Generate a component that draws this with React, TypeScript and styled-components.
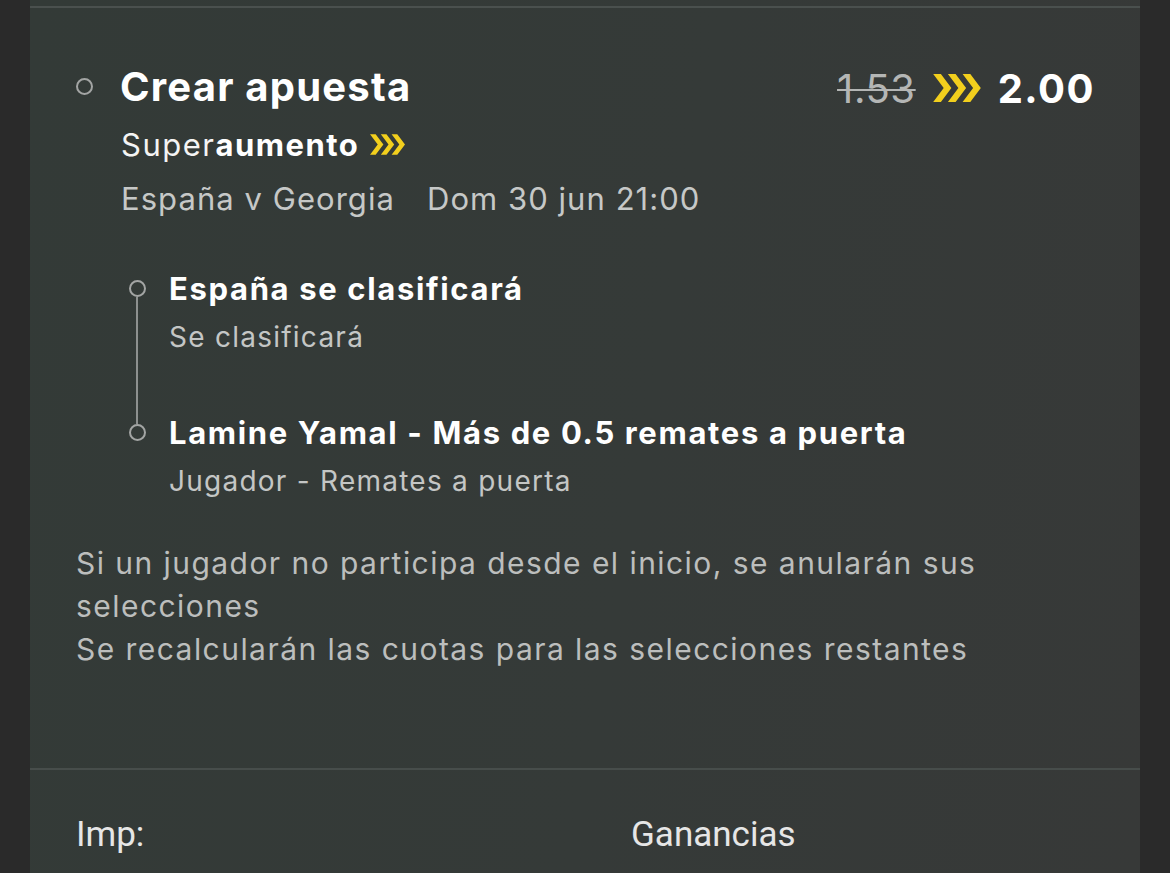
import React from "react";
import styled, { createGlobalStyle } from "styled-components";

const Global = createGlobalStyle`
  html, body { margin: 0; padding: 0; background: #2a2a2a; }
  body { font-family: Inter, "Noto Sans", "DejaVu Sans", sans-serif; -webkit-font-smoothing: antialiased; }
`;

const Page = styled.div`
  width: 1170px;
  height: 873px;
  overflow: hidden;
  background: #2a2a2a;
  display: flex;
  justify-content: center;
`;

const Panel = styled.div`
  width: 1110px;
  height: 873px;
  background: linear-gradient(100deg, #333a37 0%, #353a38 55%, #373938 100%);
  display: flex;
  flex-direction: column;
`;

const TopStrip = styled.div`
  height: 6px;
  border-bottom: 2px solid #4a504e;
  flex-shrink: 0;
`;

const Body = styled.div`
  padding: 54px 45px 0 46px;
  height: 760px;
  flex-shrink: 0;
  box-sizing: border-box;
`;

const HeaderRow = styled.div`
  display: flex;
  align-items: flex-start;
  justify-content: space-between;
`;

const HeaderLeft = styled.div`
  display: flex;
  flex-direction: column;
`;

const TitleRow = styled.div`
  display: flex;
  align-items: center;
  height: 48px;
`;

const Ring = styled.span<{ $size: number }>`
  display: block;
  width: ${(p) => p.$size}px;
  height: ${(p) => p.$size}px;
  box-sizing: border-box;
  border: 2.5px solid #a3a5a4;
  border-radius: 50%;
  flex-shrink: 0;
`;

const Title = styled.div`
  margin-left: 27px;
  color: #ffffff;
  font-weight: 700;
  font-size: 40px;
  letter-spacing: 1.2px;
`;

const Indented = styled.div`
  padding-left: 45px;
  display: flex;
  flex-direction: column;
  margin-top: 7px;
`;

const BoostLine = styled.div`
  display: flex;
  align-items: center;
  height: 54px;
  color: #f4f4f4;
  font-size: 31px;
  letter-spacing: 1.5px;
  b { font-weight: 700; color: #ffffff; }
`;

const EventLine = styled.div`
  display: flex;
  align-items: center;
  gap: 32px;
  height: 54px;
  color: #c6c8c7;
  font-size: 31px;
  letter-spacing: 1.05px;
`;

const Odds = styled.div`
  display: flex;
  align-items: center;
  height: 48px;
  margin-top: 2px;
`;

const OldOdds = styled.span`
  color: #b4b6b5;
  font-size: 40px;
  letter-spacing: 0.6px;
  text-decoration: line-through;
  text-decoration-thickness: 2px;
  margin-right: 16px;
`;

const NewOdds = styled.span`
  color: #ffffff;
  font-weight: 700;
  font-size: 40px;
  letter-spacing: 1.5px;
  margin-left: 16px;
`;

const Selections = styled.div`
  margin: 42px 0 0 53px;
  display: flex;
  flex-direction: column;
`;

const Selection = styled.div`
  display: grid;
  grid-template-columns: 16px 1fr;
  column-gap: 24px;
`;

const Rail = styled.div`
  display: flex;
  flex-direction: column;
  align-items: center;
`;

const RailLine = styled.div<{ $show: boolean; $grow?: boolean }>`
  width: 2px;
  background: ${(p) => (p.$show ? "#8d908f" : "transparent")};
  ${(p) => (p.$grow ? "flex: 1;" : "height: 13px;")}
`;

const SelText = styled.div<{ $last: boolean }>`
  display: flex;
  flex-direction: column;
  padding-bottom: ${(p) => (p.$last ? 0 : 54)}px;
`;

const SelTitle = styled.div`
  height: 42px;
  display: flex;
  align-items: center;
  color: #ffffff;
  font-weight: 700;
  font-size: 31px;
  letter-spacing: 1.65px;
`;

const SelSub = styled.div`
  margin-top: 8px;
  height: 40px;
  display: flex;
  align-items: center;
  color: #c4c6c5;
  font-size: 28px;
  letter-spacing: 1.25px;
`;

const Notes = styled.div`
  margin-top: 41px;
  color: #bcbebd;
  font-size: 30px;
  line-height: 43px;
  letter-spacing: 1.45px;
`;

const Divider = styled.div`
  height: 2px;
  background: #474d4b;
  flex-shrink: 0;
`;

const Footer = styled.div`
  display: grid;
  grid-template-columns: 555px 1fr;
  padding: 45px 46px 0 46px;
  color: #e6e6e6;
  font-family: Roboto, "Noto Sans", sans-serif;
  font-size: 35px;
  line-height: 40px;
`;

const Chevrons = ({ w, h }: { w: number; h: number }) => (
  <svg width={w} height={h} viewBox="0 0 34 20" style={{ display: "block" }}>
    {[0, 10.5, 21].map((x) => (
      <polygon
        key={x}
        fill="#f2cf1d"
        points={`${x},0 ${x + 5.5},0 ${x + 13},10 ${x + 5.5},20 ${x},20 ${x + 7.5},10`}
      />
    ))}
  </svg>
);

const selections = [
  { title: "España se clasificará", sub: "Se clasificará" },
  { title: "Lamine Yamal - Más de 0.5 remates a puerta", sub: "Jugador - Remates a puerta" },
];

export default function App() {
  return (
    <Page>
      <Global />
      <Panel>
        <TopStrip />
        <Body>
          <HeaderRow>
            <HeaderLeft>
              <TitleRow>
                <Ring $size={17} />
                <Title>Crear apuesta</Title>
              </TitleRow>
              <Indented>
                <BoostLine>
                  Super<b>aumento</b>
                  <span style={{ marginLeft: 11 }}>
                    <Chevrons w={35} h={21} />
                  </span>
                </BoostLine>
                <EventLine>
                  <span>España v Georgia</span>
                  <span>Dom 30 jun 21:00</span>
                </EventLine>
              </Indented>
            </HeaderLeft>
            <Odds>
              <OldOdds>1.53</OldOdds>
              <Chevrons w={50} h={28} />
              <NewOdds>2.00</NewOdds>
            </Odds>
          </HeaderRow>
          <Selections>
            {selections.map((s, i) => {
              const last = i === selections.length - 1;
              return (
                <Selection key={s.title}>
                  <Rail>
                    <RailLine $show={i > 0} />
                    <Ring $size={17} />
                    <RailLine $show={!last} $grow />
                  </Rail>
                  <SelText $last={last}>
                    <SelTitle>{s.title}</SelTitle>
                    <SelSub>{s.sub}</SelSub>
                  </SelText>
                </Selection>
              );
            })}
          </Selections>
          <Notes>
            <div>Si un jugador no participa desde el inicio, se anularán sus selecciones</div>
            <div>Se recalcularán las cuotas para las selecciones restantes</div>
          </Notes>
        </Body>
        <Divider />
        <Footer>
          <span>Imp:</span>
          <span>Ganancias</span>
        </Footer>
      </Panel>
    </Page>
  );
}
